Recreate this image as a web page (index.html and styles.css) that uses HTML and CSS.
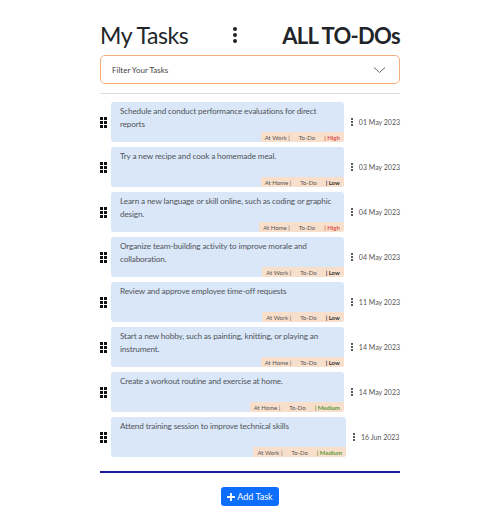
FILE: index.html
```html
<!DOCTYPE html>
<html>
<head>
<meta charset="utf-8">
<link rel="stylesheet" href="styles.css">
</head>
<body>
<div class="wrap">
  <header class="head">
    <h1 class="title">My Tasks</h1>
    <span class="kebab"><i></i><i></i><i></i></span>
    <h2 class="all">ALL TO-DOs</h2>
  </header>
  <div class="filter">
    <span>Filter Your Tasks</span>
    <svg width="13" height="8" viewBox="0 0 13 8"><path d="M1 1.5l5.5 5 5.5-5" fill="none" stroke="#666" stroke-width="1"/></svg>
  </div>
  <hr class="sep">
  <ul class="list">
    <li class="row">
      <span class="grip"><i></i><i></i><i></i><i></i><i></i><i></i></span>
      <div class="card"><p>Schedule and conduct performance evaluations for direct reports</p>
        <div class="tags"><span>At Work |</span><span>To-Do</span><span class="pri high">| High</span></div></div>
      <span class="dots"><i></i><i></i><i></i></span><span class="date">01 May 2023</span>
    </li>
    <li class="row">
      <span class="grip"><i></i><i></i><i></i><i></i><i></i><i></i></span>
      <div class="card"><p>Try a new recipe and cook a homemade meal.</p>
        <div class="tags"><span>At Home |</span><span>To-Do</span><span class="pri low">| Low</span></div></div>
      <span class="dots"><i></i><i></i><i></i></span><span class="date">03 May 2023</span>
    </li>
    <li class="row">
      <span class="grip"><i></i><i></i><i></i><i></i><i></i><i></i></span>
      <div class="card"><p>Learn a new language or skill online, such as coding or graphic design.</p>
        <div class="tags"><span>At Home |</span><span>To-Do</span><span class="pri high">| High</span></div></div>
      <span class="dots"><i></i><i></i><i></i></span><span class="date">04 May 2023</span>
    </li>
    <li class="row">
      <span class="grip"><i></i><i></i><i></i><i></i><i></i><i></i></span>
      <div class="card"><p>Organize team-building activity to improve morale and collaboration.</p>
        <div class="tags"><span>At Work |</span><span>To-Do</span><span class="pri low">| Low</span></div></div>
      <span class="dots"><i></i><i></i><i></i></span><span class="date">04 May 2023</span>
    </li>
    <li class="row">
      <span class="grip"><i></i><i></i><i></i><i></i><i></i><i></i></span>
      <div class="card"><p>Review and approve employee time-off requests</p>
        <div class="tags"><span>At Work |</span><span>To-Do</span><span class="pri low">| Low</span></div></div>
      <span class="dots"><i></i><i></i><i></i></span><span class="date">11 May 2023</span>
    </li>
    <li class="row">
      <span class="grip"><i></i><i></i><i></i><i></i><i></i><i></i></span>
      <div class="card"><p>Start a new hobby, such as painting, knitting, or playing an instrument.</p>
        <div class="tags"><span>At Home |</span><span>To-Do</span><span class="pri low">| Low</span></div></div>
      <span class="dots"><i></i><i></i><i></i></span><span class="date">14 May 2023</span>
    </li>
    <li class="row">
      <span class="grip"><i></i><i></i><i></i><i></i><i></i><i></i></span>
      <div class="card"><p>Create a workout routine and exercise at home.</p>
        <div class="tags"><span>At Home |</span><span>To-Do</span><span class="pri med">| Medium</span></div></div>
      <span class="dots"><i></i><i></i><i></i></span><span class="date">14 May 2023</span>
    </li>
    <li class="row">
      <span class="grip"><i></i><i></i><i></i><i></i><i></i><i></i></span>
      <div class="card"><p>Attend training session to improve technical skills</p>
        <div class="tags"><span>At Work |</span><span>To-Do</span><span class="pri med">| Medium</span></div></div>
      <span class="dots"><i></i><i></i><i></i></span><span class="date">16 Jun 2023</span>
    </li>
  </ul>
  <hr class="bottom">
  <div class="actions">
    <button class="add"><svg width="8" height="8" viewBox="0 0 8 8"><path d="M4 0v8M0 4h8" stroke="#fff" stroke-width="1.8"/></svg>Add Task</button>
  </div>
</div>
</body>
</html>
```

FILE: styles.css
```css
* { box-sizing: border-box; }
body {
  margin: 0;
  background: #fff;
  font-family: Lato, "Noto Sans", sans-serif;
  color: #212529;
}
.wrap {
  width: 300px;
  margin: 0 auto;
  padding-top: 20px;
}
.head {
  display: flex;
  align-items: center;
  height: 30px;
}
.title {
  margin: 0;
  font-size: 23px;
  font-weight: 400;
  letter-spacing: -0.4px;
  white-space: nowrap;
  width: 133px;
}
.all {
  margin: 0;
  font-size: 22px;
  font-weight: 700;
  letter-spacing: -0.7px;
  white-space: nowrap;
  flex: 1;
  text-align: right;
}
.kebab {
  display: flex;
  flex-direction: column;
  gap: 2px;
}
.kebab i {
  width: 4px;
  height: 4px;
  border-radius: 50%;
  background: #222;
}
.filter {
  margin-top: 5px;
  height: 29px;
  border: 1.5px solid #f3ae80;
  border-radius: 5px;
  display: flex;
  align-items: center;
  justify-content: space-between;
  padding: 0 13px 0 11px;
  font-size: 8px;
  color: #444;
}
.sep {
  margin: 9px 0 0;
  border: 0;
  border-top: 1px solid #ddd;
}
.list {
  list-style: none;
  margin: 8px 0 0;
  padding: 0;
  display: flex;
  flex-direction: column;
  gap: 5px;
}
.row {
  display: flex;
  align-items: center;
}
.grip {
  width: 7px;
  display: grid;
  grid-template-columns: 3px 3px;
  gap: 1px;
  margin-right: 4px;
}
.grip i {
  width: 3px;
  height: 3px;
  background: #111;
}
.card {
  width: 235px;
  height: 40px;
  background: #dae7f8;
  border-radius: 3px;
  display: flex;
  flex-direction: column;
  justify-content: space-between;
  overflow: hidden;
}
.card p {
  margin: 0;
  padding: 3px 9px 0;
  font-size: 8.2px;
  letter-spacing: -0.15px;
  line-height: 13px;
  color: #50555b;
}
.tags {
  align-self: flex-end;
  display: flex;
  background: #f8dfcc;
  height: 10px;
  align-items: center;
  font-size: 6px;
  color: #555;
  padding: 0 4px;
  gap: 9px;
  white-space: nowrap;
}
.pri { font-weight: 700; }
.high { color: #d9534f; }
.low { color: #333; }
.med { color: #5e9a3a; }
.dots {
  display: flex;
  flex-direction: column;
  gap: 1px;
  margin-left: 7px;
  margin-right: 6px;
}
.dots i {
  width: 2px;
  height: 2px;
  border-radius: 50%;
  background: #222;
}
.date {
  font-size: 7px;
  color: #555;
  white-space: nowrap;
}
.bottom {
  margin: 14px 0 0;
  border: 0;
  border-top: 2px solid #1a1aa0;
}
.actions {
  display: flex;
  justify-content: center;
  margin-top: 14px;
}
.add {
  background: #0d6efd;
  color: #fff;
  border: 0;
  border-radius: 3px;
  font-family: inherit;
  font-size: 9px;
  height: 19px;
  padding: 0 6px;
  display: flex;
  align-items: center;
  gap: 2px;
}
```
